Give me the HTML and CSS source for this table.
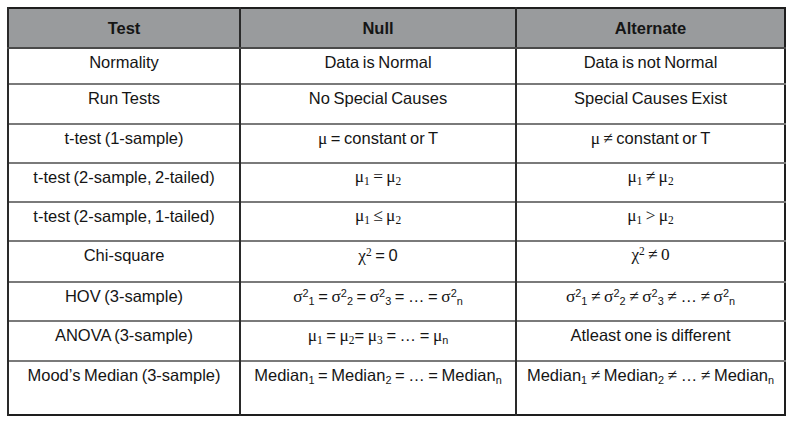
FILE: index.html
```html
<!DOCTYPE html>
<html>
<head>
<meta charset="utf-8">
<link rel="stylesheet" href="styles.css">
</head>
<body>
<div class="page">
<table class="hyp">
  <colgroup>
    <col class="c1"><col class="c2"><col class="c3">
  </colgroup>
  <thead>
    <tr class="r-head"><th>Test</th><th>Null</th><th>Alternate</th></tr>
  </thead>
  <tbody>
    <tr class="r36"><td>Normality</td><td>Data is Normal</td><td>Data is not Normal</td></tr>
    <tr class="r40"><td>Run Tests</td><td>No Special Causes</td><td>Special Causes Exist</td></tr>
    <tr class="r39"><td>t-test (1-sample)</td><td><span class="g">μ</span> = constant or T</td><td><span class="g">μ ≠</span> constant or T</td></tr>
    <tr class="r39"><td>t-test (2-sample, 2-tailed)</td><td class="m">μ<sub>1</sub> = μ<sub>2</sub></td><td class="m">μ<sub>1</sub> ≠ μ<sub>2</sub></td></tr>
    <tr class="r39"><td>t-test (2-sample, 1-tailed)</td><td class="m">μ<sub>1</sub> ≤ μ<sub>2</sub></td><td class="m">μ<sub>1</sub> &gt; μ<sub>2</sub></td></tr>
    <tr class="r41"><td>Chi-square</td><td><span class="g">χ<sup>2</sup></span> = 0</td><td class="m">χ<sup>2</sup> ≠ 0</td></tr>
    <tr class="r39"><td>HOV (3-sample)</td><td><span class="g">σ</span><sup>2</sup><sub>1</sub> = <span class="g">σ</span><sup>2</sup><sub>2</sub> = <span class="g">σ</span><sup>2</sup><sub>3</sub> = … = <span class="g">σ</span><sup>2</sup><sub>n</sub></td><td><span class="g">σ</span><sup>2</sup><sub>1</sub> <span class="g">≠</span> <span class="g">σ</span><sup>2</sup><sub>2</sub> <span class="g">≠</span> <span class="g">σ</span><sup>2</sup><sub>3</sub> <span class="g">≠</span> … <span class="g">≠</span> <span class="g">σ</span><sup>2</sup><sub>n</sub></td></tr>
    <tr class="r40"><td>ANOVA (3-sample)</td><td><span class="g">μ<sub>1</sub></span> = <span class="g">μ<sub>2</sub></span>= <span class="g">μ<sub>3</sub></span> = … = <span class="g">μ</span><sub>n</sub></td><td>Atleast one is different</td></tr>
    <tr class="r54"><td>Mood’s Median (3-sample)</td><td>Median<sub>1</sub> = Median<sub>2</sub> = … = Median<sub>n</sub></td><td>Median<sub>1</sub> <span class="g">≠</span> Median<sub>2</sub> <span class="g">≠</span> … <span class="g">≠</span> Median<sub>n</sub></td></tr>
  </tbody>
</table>
</div>
</body>
</html>
```

FILE: styles.css
```css
html, body {
  margin: 0;
  padding: 0;
  background: #ffffff;
}

.page {
  padding: 7px 0 0 7px;
}

.hyp {
  border-collapse: collapse;
  table-layout: fixed;
  width: 777px;
  font-family: "Liberation Sans", Arial, sans-serif;
  font-size: 16.5px;
  word-spacing: -1px;
  color: #151515;
  border: 2px solid #1e1e1e;
}

.c1 { width: 232px; }
.c2 { width: 276px; }
.c3 { width: 269px; }

.hyp th {
  background: #999b9d;
  font-weight: bold;
  text-align: center;
  vertical-align: middle;
  padding: 0;
  border-left: 2px solid #2a2a2a;
  border-bottom: 2px solid #4a4a4a;
  line-height: 19px;
}

.hyp td {
  text-align: center;
  vertical-align: top;
  padding: 4px 2px 0 2px;
  border-left: 2px solid #2a2a2a;
  border-top: 2px solid #7a7a7a;
  line-height: 18px;
  white-space: nowrap;
}

.r-head { height: 40px; }
.r36 { height: 36px; }
.r39 { height: 39px; }
.r40 { height: 40px; }
.r41 { height: 41px; }
.r54 { height: 54px; }

.g,
.m {
  font-family: "Liberation Serif", "Times New Roman", serif;
  font-size: 1.05em;
}

.m .g, .g .g { font-size: 1em; }

sub, sup {
  font-size: 0.66em;
  line-height: 0;
  position: relative;
  vertical-align: baseline;
}

sub { top: 0.3em; }
sup { top: -0.45em; }
```
